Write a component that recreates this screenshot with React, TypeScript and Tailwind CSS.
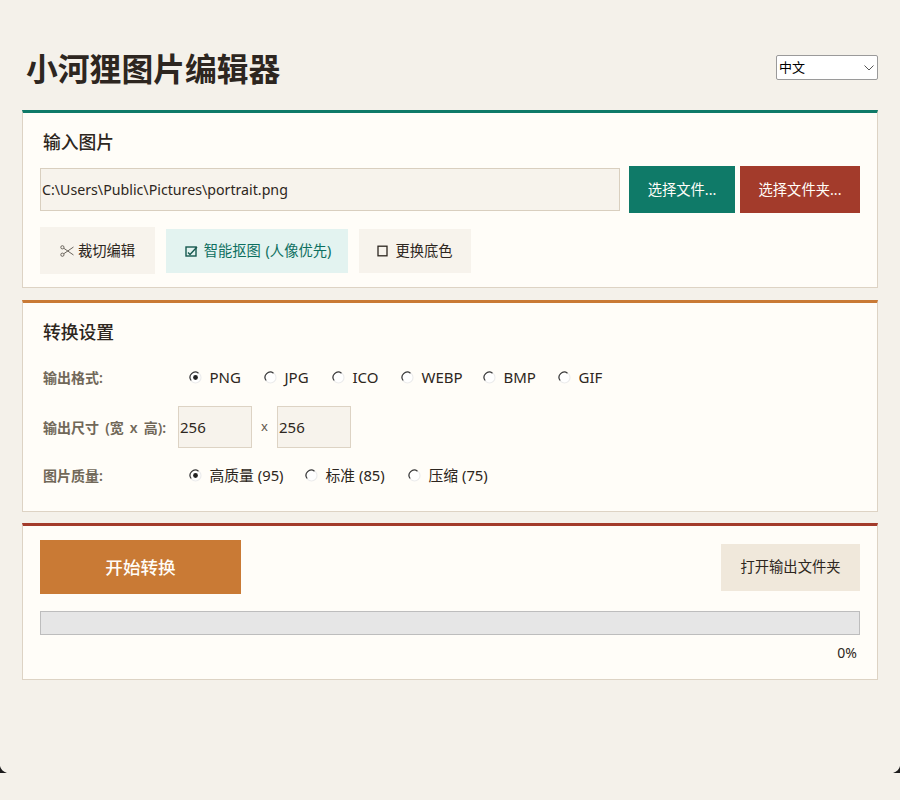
import React from "react";

function Radio({ checked }: { checked?: boolean }) {
  return (
    <svg width="13" height="13" viewBox="0 0 13 13" className="shrink-0">
      <circle cx="6.5" cy="6.5" r="5.5" fill="#ffffff" stroke="#ececec" strokeWidth="1.2" />
      <path d="M2.2 9.5A5.2 5.2 0 0 1 9.5 2.2" fill="none" stroke="#3a3a3a" strokeWidth="1.2" />
      {checked && <circle cx="6.5" cy="6.5" r="2.4" fill="#222222" />}
    </svg>
  );
}

function Option({ label, checked, className }: { label: string; checked?: boolean; className: string }) {
  return (
    <label className={`flex items-center gap-[7.5px] ${className}`}>
      <Radio checked={checked} />
      <span>{label}</span>
    </label>
  );
}

function Scissors() {
  return (
    <svg width="14" height="12" viewBox="0 0 14 12" fill="none" stroke="#6a645c" strokeWidth="1">
      <circle cx="2.4" cy="2.3" r="1.6" />
      <circle cx="2.4" cy="9.7" r="1.6" />
      <path d="M3.7 3.2L13.5 10M3.7 8.8L13.5 2" />
    </svg>
  );
}

function Checked() {
  return (
    <svg width="13" height="12" viewBox="0 0 13 12" fill="none" stroke="#15584e" strokeWidth="1.4">
      <rect x="1" y="2" width="10" height="9" />
      <path d="M3 7.5l2 2L12 2" />
    </svg>
  );
}

function Square() {
  return (
    <svg width="11" height="12" viewBox="0 0 11 12" fill="none" stroke="#2d2620" strokeWidth="1.3">
      <rect x="1" y="1.2" width="9" height="9.6" />
    </svg>
  );
}

function Corner({ side }: { side: "l" | "r" }) {
  return (
    <svg width="7" height="7" viewBox="0 0 7 7" className={side === "l" ? "absolute left-0 top-[766px]" : "absolute right-0 top-[766px]"}>
      <path d={side === "l" ? "M0 0Q1 5 7 7H0Z" : "M7 0Q6 5 0 7H7Z"} fill="#1c1c1c" />
    </svg>
  );
}

export default function App() {
  return (
    <div className="relative h-[800px] w-[900px] overflow-hidden bg-[#f4f1ea] pl-[22px] pr-[22px] pt-[47px] text-[14.3px] text-[#2d2620] font-['Noto_Sans','Noto_Sans_CJK_SC',sans-serif]">
      <header className="flex h-[63px] items-start justify-between">
        <h1 className="ml-[4px] text-[31.8px] font-bold leading-[44px]">小河狸图片编辑器</h1>
        <div className="relative mt-[8px] h-[25px] w-[102px]">
          <select className="h-full w-full appearance-none rounded-[2px] border border-[#9a9a9a] bg-white pl-[2px] text-[13px] leading-[23px] text-black outline-none">
            <option>中文</option>
          </select>
          <svg width="10" height="6" viewBox="0 0 10 6" fill="none" stroke="#555555" className="absolute right-[4px] top-[10px]">
            <path d="M0.5 0.5L5 5L9.5 0.5" />
          </svg>
        </div>
      </header>

      <section className="h-[178px] border border-t-[3px] border-[#ddd3c4] border-t-[#0f7a68] bg-[#fffdf8] pl-[17px] pr-[17px]">
        <h2 className="ml-[3px] mt-[16px] text-[17.8px] font-medium leading-[26px]">输入图片</h2>
        <div className="mt-[11px] flex h-[47px] items-center">
          <div className="flex h-[43px] w-[580px] items-center border border-[#d9cfbf] bg-[#f7f3ec] pl-[1px] text-[14.2px]">
            C:\Users\Public\Pictures\portrait.png
          </div>
          <button className="ml-[9px] h-[47px] w-[106px] bg-[#0f7a68] text-[14.3px] text-[#fffdf8]">选择文件...</button>
          <button className="ml-[5px] h-[47px] w-[120px] bg-[#a33b2b] text-[14.3px] text-[#fffdf8]">选择文件夹...</button>
        </div>
        <div className="mt-[14px] flex items-center">
          <button className="flex h-[47px] w-[115px] items-center justify-center gap-[4px] bg-[#f7f3ec]">
            <Scissors />
            裁切编辑
          </button>
          <button className="ml-[11px] flex h-[44px] w-[182px] items-center justify-center gap-[6px] bg-[#e3f3f0] pl-[2px] text-[#0d6f5f] [word-spacing:1px]">
            <Checked />
            智能抠图 (人像优先)
          </button>
          <button className="ml-[11px] flex h-[44px] w-[112px] items-center justify-center gap-[7px] bg-[#f7f3ec]">
            <Square />
            更换底色
          </button>
        </div>
      </section>

      <section className="mt-[12px] h-[212px] border border-t-[3px] border-[#ddd3c4] border-t-[#c97a35] bg-[#fffdf8] pl-[20px]">
        <h2 className="mt-[16px] text-[17.8px] font-medium leading-[26px]">转换设置</h2>
        <div className="mt-[20px] flex h-[24px] items-center">
          <span className="w-[146px] text-[14px] font-semibold text-[#716859]">输出格式:</span>
          <div className="flex items-center text-[15px]">
            <Option label="PNG" checked className="w-[75px]" />
            <Option label="JPG" className="w-[68px]" />
            <Option label="ICO" className="w-[69px]" />
            <Option label="WEBP" className="w-[82px]" />
            <Option label="BMP" className="w-[75px]" />
            <Option label="GIF" className="w-[60px]" />
          </div>
        </div>
        <div className="mt-[17px] flex h-[42px] items-center">
          <span className="w-[135px] text-[14px] font-semibold text-[#716859] [word-spacing:2.5px]">输出尺寸 (宽 x 高):</span>
          <input readOnly value="256" className="h-[42px] w-[74px] border border-[#ddd3c4] bg-[#f7f3ec] pl-[1px] text-[15px] outline-none" />
          <span className="w-[25px] text-center text-[13px] text-[#5f574d]">x</span>
          <input readOnly value="256" className="h-[42px] w-[74px] border border-[#ddd3c4] bg-[#f7f3ec] pl-[1px] text-[15px] outline-none" />
        </div>
        <div className="mt-[15px] flex h-[24px] items-center">
          <span className="w-[146px] text-[14px] font-semibold text-[#716859]">图片质量:</span>
          <div className="flex items-center text-[14.8px]">
            <Option label="高质量 (95)" checked className="w-[116px]" />
            <Option label="标准 (85)" className="w-[103px]" />
            <Option label="压缩 (75)" className="w-[110px]" />
          </div>
        </div>
      </section>

      <section className="mt-[11px] h-[157px] border border-t-[3px] border-[#ddd3c4] border-t-[#a33b2b] bg-[#fffdf8] px-[17px]">
        <div className="mt-[14px] flex items-center justify-between">
          <button className="h-[54px] w-[201px] bg-[#c97a35] text-[17.6px] font-medium text-[#fffdf8]">开始转换</button>
          <button className="h-[47px] w-[139px] bg-[#f0e8db]">打开输出文件夹</button>
        </div>
        <div className="mt-[17px] h-[24px] border border-[#bdbdbd] bg-[#e6e6e6]" />
        <p className="mt-[8px] pr-[3px] text-right text-[14px] leading-[19px]">0%</p>
      </section>

      <Corner side="l" />
      <Corner side="r" />
    </div>
  );
}
